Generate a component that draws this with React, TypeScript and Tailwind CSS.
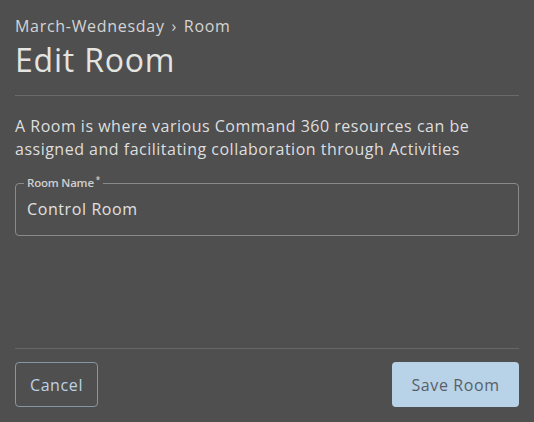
import React, { useState } from 'react';

const App: React.FC = () => {
  const [name, setName] = useState('Control Room');

  return (
    <div
      className="w-[534px] h-[422px] bg-[#4f4f4f] text-[#dcdcdc] flex flex-col px-[15px] overflow-hidden tracking-[0.6px]"
      style={{ fontFamily: '"Open Sans", Lato, sans-serif' }}
    >
      {/* Header */}
      <div className="pt-[15px] text-[16px] leading-[22px] text-[#d4d4d4] tracking-[0.7px]">
        March-Wednesday <span className="mx-[2px]">›</span> Room
      </div>
      <h1 className="text-[32px] leading-[42px] font-normal text-[#e4e4e0] mt-[2px] tracking-[0.8px]">Edit Room</h1>
      <div className="border-t border-[#6a6a6a] mt-[14px]" />

      {/* Body */}
      <p className="mt-[19px] text-[16px] leading-[23px] text-[#dedede] tracking-[0.5px]">
        A Room is where various Command 360 resources can be assigned and facilitating collaboration through
        Activities
      </p>

      <fieldset className="mt-[16px] border border-[#8a8a8a] rounded-[4px] px-[11px] pb-[14px] pt-0">
        <legend className="ml-[-3px] px-[3px] text-[11.5px] leading-[12px] font-semibold text-[#cfcfcf] tracking-[-0.2px]">
          Room Name<sup className="text-[8px] ml-[2px]">*</sup>
        </legend>
        <input
          value={name}
          onChange={(e) => setName(e.target.value)}
          className="w-full bg-transparent outline-none text-[16px] leading-[24px] text-[#e0e0e0] mt-[8px] tracking-[0.6px]"
        />
      </fieldset>

      <div className="flex-1" />

      {/* Footer */}
      <div className="border-t border-[#666666]" />
      <div className="flex justify-between items-center pt-[13px] pb-[15px]">
        <button className="h-[45px] w-[83px] rounded-[4px] border border-[#8796a3] text-[16px] text-[#bcd3e6]">
          Cancel
        </button>
        <button className="h-[45px] w-[127px] rounded-[4px] bg-[#b8d3e8] text-[16px] text-[#5a6068]">
          Save Room
        </button>
      </div>
    </div>
  );
};

export default App;
